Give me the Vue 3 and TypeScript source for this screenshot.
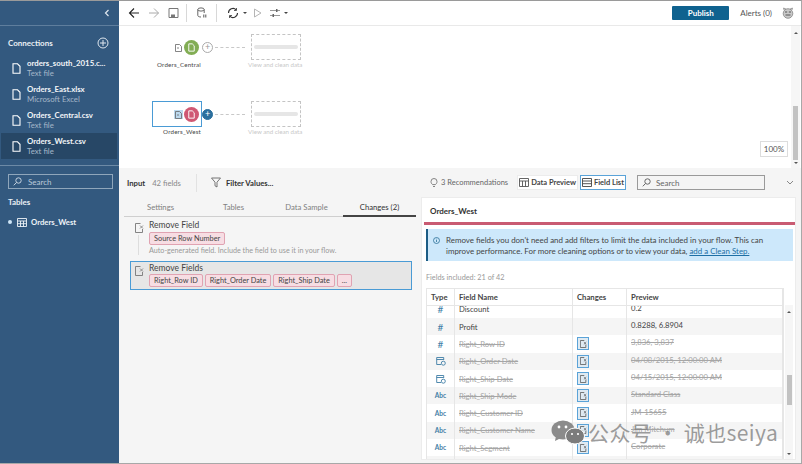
<script setup lang="ts">
interface Connection {
  name: string
  kind: string
  active?: boolean
}

interface FieldRow {
  type: 'num' | 'date' | 'abc' | 'blank'
  name: string
  preview: string
  removed: boolean
}

const connections: Connection[] = [
  { name: 'orders_south_2015.c...', kind: 'Text file' },
  { name: 'Orders_East.xlsx', kind: 'Microsoft Excel' },
  { name: 'Orders_Central.csv', kind: 'Text file' },
  { name: 'Orders_West.csv', kind: 'Text file', active: true },
]

const rows: FieldRow[] = [
  { type: 'num', name: 'Profit', preview: '0.8288, 6.8904', removed: false },
  { type: 'num', name: 'Right_Row ID', preview: '3,836, 3,837', removed: true },
  { type: 'date', name: 'Right_Order Date', preview: '04/08/2015, 12:00:00 AM', removed: true },
  { type: 'date', name: 'Right_Ship Date', preview: '04/15/2015, 12:00:00 AM', removed: true },
  { type: 'abc', name: 'Right_Ship Mode', preview: 'Standard Class', removed: true },
  { type: 'abc', name: 'Right_Customer ID', preview: 'JM-15655', removed: true },
  { type: 'abc', name: 'Right_Customer Name', preview: 'Jim Mitchum', removed: true },
  { type: 'abc', name: 'Right_Segment', preview: 'Corporate', removed: true },
  { type: 'blank', name: '', preview: '', removed: true },
]

const nodes = [
  { name: 'Orders_Central', cls: 'central' },
  { name: 'Orders_West', cls: 'west' },
]
</script>

<template>
  <div class="app">
    <aside class="sidebar">
      <div class="side-head">
        <svg width="10" height="10" viewBox="0 0 10 10"><path d="M6.5 2 3.5 5l3 3" fill="none" stroke="#dfe7ef" stroke-width="1.2" /></svg>
      </div>
      <section class="conn">
        <div class="conn-title">
          <span>Connections</span>
          <svg width="12" height="12" viewBox="0 0 12 12"><circle cx="6" cy="6" r="5" fill="none" stroke="#dfe7ef" /><path d="M6 3v6M3 6h6" stroke="#dfe7ef" /></svg>
        </div>
        <div v-for="c in connections" :key="c.name" class="conn-item" :class="{ active: c.active }">
          <svg width="9" height="11" viewBox="0 0 9 11"><path d="M1 .8h4.5L8 3.3v6.9H1z" fill="none" stroke="#fff" stroke-width="1.1" /></svg>
          <div>
            <div class="conn-name">{{ c.name }}</div>
            <div class="conn-kind">{{ c.kind }}</div>
          </div>
        </div>
      </section>
      <section class="side-lower">
        <div class="side-search">
          <svg width="9" height="9" viewBox="0 0 9 9"><circle cx="5.5" cy="3.5" r="2.7" fill="none" stroke="#c5d2df" /><path d="M3.5 5.5.8 8.3" stroke="#c5d2df" /></svg>
          <span>Search</span>
        </div>
        <div class="tables-title">Tables</div>
        <div class="table-item">
          <i class="dot"></i>
          <svg width="10" height="9" viewBox="0 0 10 9"><path d="M.5.5h9v8h-9zM.5 3h9M.5 5.7h9M3.5 3v5.5M6.5 3v5.5" fill="none" stroke="#eef3f7" stroke-width=".9" /></svg>
          <span>Orders_West</span>
        </div>
      </section>
    </aside>

    <main class="main">
      <header class="toolbar">
        <svg class="tb" width="12" height="12" viewBox="0 0 12 12"><path d="M11 6H1.5M6 1.5 1.5 6 6 10.5" fill="none" stroke="#222" stroke-width="1.1" /></svg>
        <svg class="tb" width="12" height="12" viewBox="0 0 12 12"><path d="M1 6h9.5M6 1.5 10.5 6 6 10.5" fill="none" stroke="#aaa" /></svg>
        <svg class="tb" width="12" height="12" viewBox="0 0 12 12"><path d="M1 1.5h9v9H1z" fill="none" stroke="#777" /><path d="M3 10V7.5h4V10" fill="#777" /></svg>
        <i class="tb-sep"></i>
        <svg class="tb db" width="10" height="12" viewBox="0 0 10 12"><ellipse cx="4" cy="2.5" rx="3.2" ry="1.6" fill="none" stroke="#666" /><path d="M.8 2.5v6c0 .9 1.4 1.5 3.2 1.5M7.2 2.5V6" fill="none" stroke="#666" /><path d="M6.3 7.5h1v3h-1zM8.3 7.5h1v3h-1z" fill="#555" /></svg>
        <i class="tb-sep"></i>
        <svg class="tb refresh" width="12" height="12" viewBox="0 0 12 12"><path d="M1.5 6A4.5 4.5 0 0 1 9.2 2.8M10.5 6a4.5 4.5 0 0 1-7.7 3.2" fill="none" stroke="#333" stroke-width="1.1" /><path d="M9.5 1v2.5H7M2.5 11V8.5H5" fill="none" stroke="#333" stroke-width=".8" /></svg>
        <i class="caret"></i>
        <svg class="tb play" width="9" height="10" viewBox="0 0 9 10"><path d="M1.5 1 8 5 1.5 9z" fill="none" stroke="#b5b5b5" /></svg>
        <svg class="tb opts" width="10" height="10" viewBox="0 0 10 10"><path d="M0 2.5h10M0 7.5h10" stroke="#999" /><path d="M6 1h1.5v3H6zM2.5 6H4v3H2.5z" fill="#666" /></svg>
        <i class="caret"></i>
        <span class="grow"></span>
        <button class="publish">Publish</button>
        <span class="alerts">Alerts (0)</span>
        <svg class="avatar" width="12" height="12" viewBox="0 0 12 12"><path d="M2 3 1.5 1 4 2M10 3l.5-2L8 2" fill="#c9c9c9" stroke="#777" stroke-width=".6" /><circle cx="6" cy="6.5" r="4.8" fill="#c9c9c9" stroke="#777" stroke-width=".7" /><path d="M3 5h2.2M6.8 5H9M3.5 8h5" stroke="#555" /></svg>
      </header>

      <div class="canvas">
        <div v-for="n in nodes" :key="n.name" class="flow" :class="n.cls">
          <div class="frame"></div>
          <div class="mini">
            <svg width="7" height="8" viewBox="0 0 7 8"><path d="M.5.5h4l2 2v5h-6zM2 4h2" fill="none" stroke="#666" stroke-width=".8" /></svg>
          </div>
          <div class="disc">
            <svg width="7" height="9" viewBox="0 0 9 11"><path d="M1 .8h4.5L8 3.3v6.9H1z" fill="none" stroke="#fff" stroke-width="1.2" /></svg>
          </div>
          <div class="plus">+</div>
          <div class="dashes"></div>
          <div class="ghost"><i></i></div>
          <div class="node-name">{{ n.name }}</div>
          <div class="ghost-name">View and clean data</div>
        </div>
        <div class="zoom">100%</div>
        <div class="vscroll">
          <i class="up"></i>
          <i class="thumb"></i>
          <i class="down"></i>
        </div>
      </div>

      <div class="pane">
        <div class="pane-left">
          <div class="input-row">
            <b>Input</b>
            <span class="muted">42 fields</span>
            <i class="vsep"></i>
            <svg width="10" height="11" viewBox="0 0 10 11"><path d="M.5 1h9L6 5.2V10L4 8.8V5.2z" fill="none" stroke="#666" stroke-width=".9" /></svg>
            <b class="filter">Filter Values...</b>
          </div>
          <nav class="tabs">
            <span>Settings</span>
            <span>Tables</span>
            <span>Data Sample</span>
            <span class="on">Changes (2)</span>
          </nav>
          <div class="change">
            <i class="connector"></i>
            <svg width="9" height="10" viewBox="0 0 9 10"><path d="M5.5.5H.5v9h7V6" fill="none" stroke="#777" stroke-width=".9" /><path d="m5 2.5 3 3m0-3-3 3" stroke="#777" stroke-width=".8" /></svg>
            <div>
              <div class="change-title">Remove Field</div>
              <div class="chips"><span class="chip">Source Row Number</span></div>
              <div class="hint">Auto-generated field. Include the field to use it in your flow.</div>
            </div>
          </div>
          <div class="change selected">
            <svg width="9" height="10" viewBox="0 0 9 10"><path d="M5.5.5H.5v9h7V6" fill="none" stroke="#777" stroke-width=".9" /><path d="m5 2.5 3 3m0-3-3 3" stroke="#777" stroke-width=".8" /></svg>
            <div>
              <div class="change-title">Remove Fields</div>
              <div class="chips">
                <span class="chip">Right_Row ID</span>
                <span class="chip">Right_Order Date</span>
                <span class="chip">Right_Ship Date</span>
                <span class="chip">...</span>
              </div>
            </div>
          </div>
        </div>

        <div class="pane-right">
          <div class="right-bar">
            <svg width="8" height="11" viewBox="0 0 8 11"><path d="M2.6 7.6C1.6 6.8 1 5.8 1 4.5a3 3 0 0 1 6 0c0 1.3-.6 2.3-1.6 3.1zM3 9.5h2" fill="none" stroke="#777" stroke-width=".9" /></svg>
            <span class="recs">3 Recommendations</span>
            <div class="toggle">
              <span class="tg">
                <svg width="10" height="9" viewBox="0 0 10 9"><path d="M.5.5h9v8h-9zM.5 3h9M3.5 3v5.5M6.5 3v5.5" fill="none" stroke="#555" stroke-width=".9" /></svg>
                Data Preview
              </span>
              <span class="tg sel">
                <svg width="10" height="9" viewBox="0 0 10 9"><path d="M.5.5h9v8h-9zM.5 3h9M.5 5.7h9" fill="none" stroke="#444" stroke-width=".9" /></svg>
                Field List
              </span>
            </div>
            <div class="search">
              <svg width="9" height="9" viewBox="0 0 9 9"><circle cx="5.5" cy="3.5" r="2.7" fill="none" stroke="#666" /><path d="M3.5 5.5.8 8.3" stroke="#666" /></svg>
              <span>Search</span>
            </div>
            <svg class="chev" width="8" height="5" viewBox="0 0 8 5"><path d="m1 1 3 3 3-3" fill="none" stroke="#888" /></svg>
          </div>

          <div class="card">
            <div class="card-title">Orders_West</div>
            <div class="card-rule"></div>
            <div class="info">
              <svg width="7" height="7" viewBox="0 0 7 7"><circle cx="3.5" cy="3.5" r="3" fill="none" stroke="#2a6f97" stroke-width=".8" /><path d="M3.5 3v2M3.5 1.7v.7" stroke="#2a6f97" stroke-width=".8" /></svg>
              <p>Remove fields you don't need and add filters to limit the data included in your flow. This can improve performance. For more cleaning options or to view your data, <a>add a Clean Step.</a></p>
            </div>
            <div class="included">Fields included: 21 of 42</div>
            <div class="grid-wrap">
              <div class="grid">
                <div class="row head">
                  <span>Type</span>
                  <span>Field Name</span>
                  <span>Changes</span>
                  <span>Preview</span>
                </div>
                <div class="body">
                  <div class="row cut">
                    <span class="type"><em class="num">#</em></span>
                    <span>Discount</span>
                    <span></span>
                    <span class="pv">0.2</span>
                  </div>
                  <div v-for="(r, i) in rows" :key="r.name" class="row" :class="{ alt: i % 2 === 0, removed: r.removed }">
                    <span class="type">
                      <em v-if="r.type === 'num'" class="num">#</em>
                      <svg v-else-if="r.type === 'date'" width="10" height="10" viewBox="0 0 10 10"><path d="M5 8.5H.7V1.5h7V4M.7 3.5h7" fill="none" stroke="#3f7ea6" stroke-width=".9" /><circle cx="7.3" cy="7.2" r="2" fill="none" stroke="#3f7ea6" stroke-width=".9" /></svg>
                      <em v-else-if="r.type === 'abc'" class="abc">Abc</em>
                    </span>
                    <span class="fname">{{ r.name }}</span>
                    <span class="chg">
                      <i v-if="r.removed" class="chg-box">
                        <svg width="7" height="8" viewBox="0 0 9 10"><path d="M5.5.5H.5v9h7V6" fill="none" stroke="#555" stroke-width="1" /><path d="m5 2.5 3 3m0-3-3 3" stroke="#555" stroke-width=".9" /></svg>
                      </i>
                    </span>
                    <span class="pv">{{ r.preview }}</span>
                  </div>
                </div>
              </div>
              <div class="vscroll small">
                <i class="up"></i>
                <i class="thumb"></i>
                <i class="down"></i>
              </div>
            </div>
          </div>
        </div>
      </div>
    </main>

    <div class="watermark">
      <svg width="34" height="25" viewBox="0 0 34 25"><ellipse cx="12" cy="10" rx="11.5" ry="9.5" fill="#8b8b8b" /><path d="M5 16 4 21l6-3z" fill="#8b8b8b" /><ellipse cx="24" cy="16" rx="9.5" ry="8" fill="#7c7c7c" stroke="#fff" /><circle cx="8" cy="7" r="1.4" fill="#fff" /><circle cx="15" cy="7" r="1.4" fill="#fff" /><circle cx="21" cy="14" r="1.1" fill="#fff" /><circle cx="27" cy="14" r="1.1" fill="#fff" /></svg>
      <span>公众号 · 诚也seiya</span>
    </div>
  </div>
</template>

<style scoped>
.app {
  position: relative;
  display: flex;
  width: 802px;
  height: 464px;
  overflow: hidden;
  box-sizing: border-box;
  border-top: 1px solid #9a9a9a;
  border-right: 1px solid #a8a8a8;
  border-bottom: 1px solid #a8a8a8;
  background: #fff;
  color: #333;
  font-family: Lato, "Liberation Sans", sans-serif;
  font-size: 8px;
}

.sidebar {
  flex: 0 0 119px;
  display: flex;
  flex-direction: column;
  background: #33597f;
  color: #fff;
}
.side-head {
  flex: 0 0 25px;
  display: flex;
  align-items: center;
  justify-content: flex-end;
  padding-right: 7px;
  border-bottom: 1px solid #5f7e9d;
  box-sizing: border-box;
}
.conn {
  height: 140px;
  box-sizing: border-box;
  padding: 10px 2px 0 1px;
  border-bottom: 1px solid #6d8aa6;
}
.conn-title {
  display: flex;
  align-items: center;
  justify-content: space-between;
  padding: 0 8px 0 7px;
  height: 14px;
  margin-bottom: 5px;
  font-weight: 700;
  color: #eaf0f5;
}
.conn-item {
  display: flex;
  align-items: center;
  gap: 6px;
  height: 26px;
  padding-left: 11px;
  font-size: 7.8px;
  line-height: 10.5px;
}
.conn-item.active {
  background: #274766;
}
.conn-name {
  color: #f2f5f8;
  font-weight: 700;
  white-space: nowrap;
}
.conn-kind {
  color: #a5b7c9;
}
.side-lower {
  padding: 8px 6px 8px 8px;
}
.side-search {
  display: flex;
  align-items: center;
  gap: 6px;
  height: 15px;
  box-sizing: border-box;
  padding-left: 4px;
  border: 1px solid #8fa6bb;
  color: #bccad8;
}
.tables-title {
  margin-top: 8px;
  font-weight: 700;
  color: #eaf0f5;
}
.table-item {
  display: flex;
  align-items: center;
  margin-top: 10px;
  font-size: 7.7px;
  font-weight: 700;
  color: #eef3f7;
}
.dot {
  width: 4px;
  height: 4px;
  margin-right: 5px;
  border-radius: 50%;
  background: #cfe6f7;
}
.table-item span {
  margin-left: 4px;
}

.main {
  flex: 1;
  min-width: 0;
  display: flex;
  flex-direction: column;
}
.toolbar {
  flex: 0 0 25px;
  display: flex;
  align-items: center;
  box-sizing: border-box;
  padding-left: 9px;
  border-bottom: 1px solid #e9e9e9;
}
.tb {
  margin-right: 8px;
  flex: none;
}
.tb-sep {
  width: 1px;
  height: 18px;
  margin: 0 10px 0 -2px;
  background: #d8d8d8;
}
.db {
  margin-right: 11px;
}
.refresh {
  margin-right: 4px;
}
.caret {
  width: 0;
  height: 0;
  margin-right: 6px;
  border: 2px solid transparent;
  border-top: 2px solid #444;
  border-bottom: 0;
}
.play {
  margin: 0 8px 0 0;
}
.opts {
  margin-right: 4px;
}
.grow {
  flex: 1;
}
.publish {
  width: 57px;
  height: 14px;
  padding: 0;
  border: 0;
  border-radius: 1px;
  background: #0f628f;
  color: #fff;
  font: 700 8px Lato, "Liberation Sans", sans-serif;
}
.alerts {
  margin: 0 10px 0 11px;
  color: #555;
}
.avatar {
  margin-right: 7px;
}

.canvas {
  position: relative;
  flex: 0 0 142px;
  background: #fff;
}
.flow {
  position: absolute;
  left: 0;
  width: 400px;
  height: 60px;
}
.central {
  top: 8px;
}
.west {
  top: 75px;
}
.frame {
  position: absolute;
  left: 33px;
  top: 0;
  width: 49px;
  height: 25px;
}
.west .frame {
  border: 1px solid #4a9bd5;
  box-sizing: content-box;
  width: 48px;
  height: 24px;
}
.mini {
  position: absolute;
  left: 55px;
  top: 9px;
  width: 9px;
  height: 9px;
  display: flex;
  align-items: center;
  justify-content: center;
}
.west .mini {
  background: #bcd9ee;
}
.disc {
  position: absolute;
  left: 65px;
  top: 6px;
  width: 15px;
  height: 15px;
  display: flex;
  align-items: center;
  justify-content: center;
  border-radius: 50%;
}
.central .disc {
  background: #82ad54;
}
.west .disc {
  background: #cf5873;
}
.plus {
  position: absolute;
  left: 83px;
  top: 8px;
  width: 11px;
  height: 11px;
  box-sizing: border-box;
  border-radius: 50%;
  border: 1px solid #aaa;
  color: #999;
  font-size: 9px;
  line-height: 8px;
  text-align: center;
}
.west .plus {
  border-color: #2a6f9e;
  background: #2a6f9e;
  color: #fff;
}
.dashes {
  position: absolute;
  left: 96px;
  top: 13px;
  width: 30px;
  border-top: 1px dashed #c8c8c8;
}
.ghost {
  position: absolute;
  left: 132px;
  top: 0;
  width: 50px;
  height: 26px;
  box-sizing: border-box;
  border: 1px dashed #c4c4c4;
  display: flex;
  align-items: center;
  justify-content: center;
}
.ghost i {
  width: 44px;
  height: 4px;
  border-radius: 2px;
  background: #e6e6e6;
}
.node-name {
  position: absolute;
  right: 318px;
  top: 27px;
  font-size: 6.2px;
  letter-spacing: .2px;
  color: #444;
}
.ghost-name {
  position: absolute;
  left: 129px;
  top: 27px;
  font-size: 6.2px;
  color: #c8c8c8;
  white-space: nowrap;
}
.zoom {
  position: absolute;
  right: 13px;
  bottom: 11px;
  width: 28px;
  height: 16px;
  box-sizing: border-box;
  border: 1px solid #ddd;
  background: #fff;
  text-align: center;
  line-height: 15px;
  color: #555;
}
.vscroll {
  position: absolute;
  right: 1px;
  top: 0;
  bottom: 0;
  width: 9px;
  background: #f6f6f6;
  display: flex;
  flex-direction: column;
  align-items: center;
  justify-content: space-between;
  padding: 6px 0 4px;
  box-sizing: border-box;
}
.vscroll .thumb {
  width: 5px;
  height: 54px;
  margin-top: auto;
  margin-bottom: 2px;
  background: #c2c2c2;
}
.up,
.down {
  width: 0;
  height: 0;
  border: 2px solid transparent;
}
.up {
  border-top: 0;
  border-bottom: 2px solid #555;
}
.down {
  border-bottom: 0;
  border-top: 2px solid #555;
}

.pane {
  flex: 1;
  min-height: 0;
  display: flex;
  background: #f5f5f5;
}
.pane-left {
  flex: 0 0 297px;
  min-width: 0;
  box-sizing: border-box;
  padding: 0 5px;
}
.input-row {
  display: flex;
  align-items: center;
  height: 29px;
  padding-left: 3px;
  font-size: 7.7px;
}
.input-row b {
  font-weight: 700;
  color: #333;
}
.muted {
  margin-left: 7px;
  color: #888;
}
.vsep {
  width: 1px;
  height: 18px;
  margin: 0 14px 0 15px;
  background: #e2e2e2;
}
.filter {
  margin-left: 5px;
}
.tabs {
  display: grid;
  grid-template-columns: repeat(4, 73px);
  height: 19px;
  border-bottom: 1px solid #cfcfcf;
  margin-right: -1px;
}
.tabs span {
  text-align: center;
  line-height: 20px;
  color: #808080;
  font-size: 7.7px;
  white-space: nowrap;
}
.tabs .on {
  color: #333;
  border-bottom: 2px solid #444;
  height: 18px;
}
.change {
  position: relative;
  display: flex;
  gap: 5px;
  padding: 3px 10px 0 11px;
  height: 42px;
  box-sizing: border-box;
}
.change > svg {
  margin-top: 3px;
  flex: none;
}
.connector {
  position: absolute;
  left: 14px;
  top: 18px;
  bottom: 4px;
  width: 1px;
  background: #ddd;
}
.change-title {
  font-size: 8.5px;
  line-height: 11px;
  color: #444;
}
.chips {
  display: flex;
  gap: 2px;
  margin-top: 1px;
}
.chip {
  box-sizing: border-box;
  padding: 0 4px;
  height: 13px;
  line-height: 11px;
  border: 1px solid #e0a3b2;
  border-radius: 2px;
  background: #f7dde3;
  color: #444;
  font-size: 7.35px;
  white-space: nowrap;
}
.hint {
  line-height: 11px;
  color: #999;
  font-size: 7.2px;
  white-space: nowrap;
}
.selected {
  margin: 2px -1px 0 6px;
  padding: 1px 4px;
  height: 29px;
  border: 1px solid #4a9bd5;
  background: #e6e6e6;
}
.selected .chips {
  margin-top: 0;
}
.pane-right {
  flex: 1;
  min-width: 0;
  display: flex;
  flex-direction: column;
  padding-left: 5px;
}
.right-bar {
  display: flex;
  align-items: center;
  height: 29px;
  padding-left: 9px;
  white-space: nowrap;
}
.right-bar > * {
  flex: none;
}
.recs {
  margin-left: 3px;
  color: #666;
  font-size: 7.5px;
}
.toggle {
  display: flex;
  gap: 2px;
  margin-left: 9px;
}
.tg {
  display: flex;
  align-items: center;
  gap: 2px;
  height: 15px;
  box-sizing: border-box;
  padding: 0 1px;
  border: 1px solid #ececec;
  background: #fff;
  font-weight: 700;
  font-size: 7.5px;
  color: #444;
}
.tg.sel {
  border-color: #5aa3d8;
}
.search {
  display: flex;
  align-items: center;
  gap: 5px;
  width: 128px;
  height: 15px;
  box-sizing: border-box;
  margin-left: 11px;
  padding-left: 4px;
  border: 1px solid #9a9a9a;
  background: #f5f5f5;
  color: #666;
}
.chev {
  margin-left: 21px;
}
.card {
  flex: 1;
  min-height: 0;
  margin-right: 5px;
  margin-bottom: 3px;
  box-sizing: border-box;
  padding: 0 0 0 2px;
  border: 1px solid #ececec;
  background: #fff;
  display: flex;
  flex-direction: column;
}
.card-title {
  flex: 0 0 24px;
  min-height: 0;
  padding-left: 6px;
  line-height: 26px;
  font-weight: 700;
  color: #333;
}
.card-rule {
  flex: 0 0 3px;
  margin-bottom: 4px;
  background: #c95b72;
}
.info {
  flex: 0 0 32px;
  display: flex;
  gap: 6px;
  box-sizing: border-box;
  padding: 6px 8px 0 5px;
  margin: 0 2px;
  border-left: 2px solid #1d5d85;
  background: #cde8fb;
  font-size: 7.93px;
  line-height: 11px;
  color: #444;
}
.info svg {
  flex: none;
  margin-top: 2px;
}
.info p {
  margin: 0;
}
.info a {
  color: #1d6fa5;
  text-decoration: underline;
}
.included {
  flex: 0 0 27px;
  box-sizing: border-box;
  padding: 11px 0 0 2px;
  line-height: 12px;
  font-size: 7.3px;
  color: #999;
}
.grid-wrap {
  position: relative;
  flex: 1;
  min-height: 0;
  display: flex;
  padding-left: 2px;
  overflow: hidden;
}
.grid {
  width: 358px;
  border: 1px solid #e6e6e6;
  border-bottom: 0;
  box-sizing: border-box;
  overflow: hidden;
}
.body {
  height: 200px;
  overflow: hidden;
}
.row {
  display: grid;
  grid-template-columns: 28px 118px 54px 1fr;
  height: 17.3px;
  font-size: 7.7px;
  color: #444;
}
.row > span {
  display: flex;
  align-items: center;
  padding-left: 4px;
  border-right: 1px solid #e6e6e6;
  white-space: nowrap;
}
.row.head {
  height: 17px;
  font-weight: 700;
  border-bottom: 1px solid #e6e6e6;
  box-sizing: border-box;
}
.row.cut {
  margin-top: -5.3px;
}
.row .pv {
  padding-bottom: 3px;
}
.row.alt {
  background: #f5f5f5;
}
.type {
  justify-content: center;
  padding-left: 0 !important;
}
.type em {
  font-style: normal;
  color: #3f7ea6;
}
.num {
  font-size: 10px;
}
.abc {
  font-size: 6.5px;
  font-weight: 700;
}
.removed .fname,
.removed .pv {
  color: #a6a6a6;
  text-decoration: line-through;
}
.chg-box {
  width: 10px;
  height: 11px;
  display: flex;
  align-items: center;
  justify-content: center;
  border: 1px solid #5aa3d8;
  background: #dfeaf2;
}
.vscroll.small {
  position: absolute;
  right: 2px;
  top: 17px;
  width: 8px;
}
.vscroll.small .thumb {
  height: 30px;
  margin-top: 62px;
  margin-bottom: auto;
}
.watermark {
  position: absolute;
  left: 551px;
  top: 416px;
  display: flex;
  align-items: center;
  gap: 3px;
  font-family: "Noto Sans CJK SC", "Noto Sans", sans-serif;
  font-size: 21px;
  letter-spacing: .4px;
  color: rgba(130, 130, 130, .8);
  pointer-events: none;
  white-space: nowrap;
}
</style>
<style>
html, body {
  margin: 0;
  background: #fff;
}
</style>
